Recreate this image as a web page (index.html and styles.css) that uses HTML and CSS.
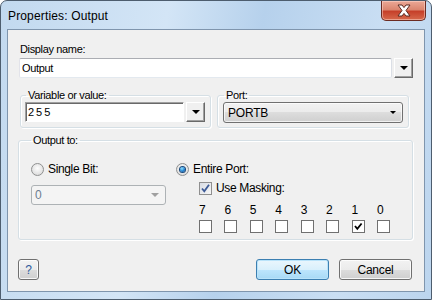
FILE: index.html
```html
<!DOCTYPE html>
<html lang="en">
<head>
    <meta charset="UTF-8">
    <title>Properties: Output</title>
    <link rel="stylesheet" href="styles.css">
</head>
<body>

<div class="window">
    <div class="titlebar">
        <span class="title">Properties: Output</span>
        <button class="close">
            <svg width="18" height="13" viewBox="0 0 18 13">
                <path d="M3 1 L7 1 L9 3.6 L11 1 L15 1 L11 6.5 L15 12 L11 12 L9 9.4 L7 12 L3 12 L7 6.5 Z" fill="#fff" stroke="#5a2a22" stroke-width="1"/>
            </svg>
        </button>
    </div>

    <div class="client">
        <div class="label">Display name:</div>
        <div class="combo-row">
            <input type="text" class="text-input" value="Output">
            <button class="drop-btn"><span class="arrow"></span></button>
        </div>

        <div class="groups">
            <fieldset class="group group-var">
                <legend>Variable or value:</legend>
                <div class="combo-row">
                    <input type="text" class="sunken-input" value="255">
                    <button class="drop-btn small"><span class="arrow"></span></button>
                </div>
            </fieldset>
            <fieldset class="group group-port">
                <legend>Port:</legend>
                <div class="select">
                    <span>PORTB</span>
                    <span class="arrow small-arrow"></span>
                </div>
            </fieldset>
        </div>

        <fieldset class="group group-output">
            <legend>Output to:</legend>
            <div class="output-cols">
                <div class="col-single">
                    <label class="radio-row"><span class="radio"></span>Single Bit:</label>
                    <div class="select disabled">
                        <span>0</span>
                        <span class="arrow small-arrow"></span>
                    </div>
                </div>
                <div class="col-entire">
                    <label class="radio-row"><span class="radio checked"></span>Entire Port:</label>
                    <label class="check-row">
                        <span class="checkbox checked">
                            <svg width="11" height="11" viewBox="0 0 11 11"><path d="M2 5.5 L4.3 8.3 L9 1.8" fill="none" stroke="#3c5a96" stroke-width="1.8"/></svg>
                        </span>Use Masking:
                    </label>
                    <div class="bits" id="bits"></div>
                </div>
            </div>
        </fieldset>

        <div class="footer">
            <button class="btn help">?</button>
            <button class="btn ok">OK</button>
            <button class="btn cancel">Cancel</button>
        </div>
    </div>
</div>

<script>
    let bits = document.getElementById("bits");
    for (let i = 7; i >= 0; i--) {
        let mark = i === 1 ? '<svg width="11" height="11" viewBox="0 0 11 11"><path d="M2 5 L4.3 7.8 L8.6 2.5" fill="none" stroke="#000" stroke-width="1.8"/></svg>' : "";
        bits.innerHTML += `<div class="bit"><span class="bit-num">${i}</span><span class="bit-box">${mark}</span></div>`;
    }
</script>

</body>
</html>
```

FILE: styles.css
```css
body {
    margin: 0;
    font-family: "Liberation Sans", Arial, sans-serif;
    font-size: 11px;
    letter-spacing: -0.35px;
    color: #000;
    background: #fff;
}
.window {
    width: 432px;
    height: 300px;
    box-sizing: border-box;
    border: 1px solid #4d5d6e;
    border-radius: 7px 7px 0 0;
    padding: 0 6px 7px 6px;
    display: flex;
    flex-direction: column;
    background: linear-gradient(100deg, #c2d9ef 0%, #d3e5f6 35%, #b6d1ec 55%, #c9def3 80%, #bcd5ee 100%);
}
.titlebar {
    height: 29px;
    display: flex;
    align-items: flex-start;
}
.title {
    font-size: 12px;
    letter-spacing: 0.15px;
    margin-top: 8px;
    margin-left: 1px;
    color: #000;
}
.close {
    margin-left: auto;
    margin-right: -1px;
    width: 45px;
    height: 20px;
    padding: 0;
    border: 1px solid #6b2b22;
    border-top: none;
    border-radius: 0 0 5px 5px;
    background: linear-gradient(#eba896 0%, #db8670 45%, #c6402a 55%, #d6694c 100%);
    box-shadow: inset 0 0 0 1px rgba(255, 220, 210, 0.5);
    display: flex;
    align-items: center;
    justify-content: center;
}
.client {
    flex: 1;
    background: #f0f0f0;
    border: 1px solid #7f95ad;
    padding: 12px 11px 11px 10px;
    display: flex;
    flex-direction: column;
}
.label {
    line-height: 14px;
    margin-left: 2px;
    margin-bottom: 2px;
}
.combo-row {
    display: flex;
    gap: 2px;
    margin-left: 1px;
}
.text-input {
    width: 375px;
    height: 20px;
    box-sizing: border-box;
    border: 1px solid #abadb3;
    border-left-color: #e2e3ea;
    border-right-color: #dbdfe6;
    border-bottom-color: #e3e9ef;
    border-radius: 2px;
    padding: 0 2px;
    font: 11px "Liberation Sans", Arial, sans-serif;
    letter-spacing: -0.35px;
    background: #fff;
    outline: none;
}
.drop-btn {
    width: 19px;
    height: 20px;
    padding: 0;
    background: #f0f0f0;
    border: 1px solid;
    border-color: #fff #696969 #696969 #fff;
    box-shadow: inset -1px -1px 0 #a0a0a0;
    display: flex;
    align-items: center;
    justify-content: center;
}
.arrow {
    width: 0;
    height: 0;
    border-left: 4px solid transparent;
    border-right: 4px solid transparent;
    border-top: 4px solid #000;
}
.small-arrow {
    border-left-width: 3px;
    border-right-width: 3px;
    border-top-width: 3px;
}
.groups {
    display: flex;
    gap: 6px;
    margin-top: 11px;
    margin-left: 2px;
}
.group {
    margin: 0;
    border: 1px solid #d5dfe5;
    border-radius: 3px;
    box-shadow: inset 1px 1px 0 #fff, 1px 1px 0 #fff;
    padding: 0 5px 4px 4px;
    min-width: 0;
}
.group legend {
    line-height: 13px;
    padding: 0 2px;
    margin-left: 1px;
}
.group-var {
    width: 191px;
    box-sizing: border-box;
}
.group-var .combo-row {
    margin-left: 0;
}
.sunken-input {
    width: 160px;
    height: 20px;
    box-sizing: border-box;
    border: 1px solid;
    border-color: #a0a0a0 #fff #fff #a0a0a0;
    box-shadow: inset 1px 1px 0 #696969;
    padding: 0 2px;
    font: 11px "Liberation Sans", Arial, sans-serif;
    letter-spacing: 2px;
    background: #fff;
    outline: none;
}
.group-port {
    width: 192px;
    box-sizing: border-box;
    padding-left: 5px;
}
.select {
    height: 21px;
    box-sizing: border-box;
    width: 180px;
    border: 1px solid #707070;
    border-radius: 3px;
    background: linear-gradient(#f2f2f2 0%, #ebebeb 50%, #dddddd 50%, #cfcfcf 100%);
    box-shadow: inset 0 0 0 1px rgba(255, 255, 255, 0.7);
    display: flex;
    align-items: center;
    justify-content: space-between;
    padding: 0 6px 0 4px;
    font-size: 12px;
    letter-spacing: -0.2px;
}
.group-output {
    width: 395px;
    box-sizing: border-box;
    margin-top: 6px;
    padding: 0 0 6px 12px;
}
.group-output legend {
    margin-left: 0;
}
.output-cols {
    display: flex;
    margin-top: 15px;
}
.col-single {
    width: 145px;
    display: flex;
    flex-direction: column;
}
.radio-row, .check-row {
    display: flex;
    align-items: center;
    gap: 4px;
    line-height: 14px;
    font-size: 12px;
}
.radio {
    width: 13px;
    height: 13px;
    box-sizing: border-box;
    border-radius: 50%;
    border: 1px solid #8f9090;
    background: radial-gradient(circle at 50% 40%, #fdfdfd 0%, #e4e4e4 60%, #cfcfcf 100%);
    display: flex;
    align-items: center;
    justify-content: center;
}
.radio.checked::after {
    content: "";
    width: 5px;
    height: 5px;
    border-radius: 50%;
    background: radial-gradient(circle at 40% 35%, #8fe3ff 0%, #1f7fd0 55%, #0b3f7a 100%);
    box-shadow: 0 0 0 1px #17477a;
}
.select.disabled {
    width: 135px;
    height: 20px;
    margin-top: 9px;
    border-color: #adb2b5;
    background: #f4f4f4;
    box-shadow: none;
    color: #6d7d90;
    padding: 0 4px 0 3px;
}
.select.disabled .arrow {
    border-top-color: #a0a0a0;
    border-left-width: 4px;
    border-right-width: 4px;
    border-top-width: 4px;
    margin-right: 2px;
}
.check-row {
    margin-left: 23px;
    margin-top: 5px;
}
.checkbox {
    width: 13px;
    height: 13px;
    box-sizing: border-box;
    border: 1px solid #8f8f8f;
    background: linear-gradient(135deg, #d8dce4, #f6f6f6);
    display: flex;
    align-items: center;
    justify-content: center;
}
.bits {
    display: grid;
    grid-template-columns: repeat(8, 25.43px);
    margin-left: 23px;
    margin-top: 9px;
}
.bit {
    display: flex;
    flex-direction: column;
    gap: 3px;
}
.bit-num {
    font-size: 12px;
    line-height: 13px;
}
.bit-box {
    width: 13px;
    height: 13px;
    box-sizing: border-box;
    border: 1px solid #707070;
    background: #fff;
    display: flex;
    align-items: center;
    justify-content: center;
}
.footer {
    display: flex;
    margin-top: 19px;
}
.btn {
    height: 21px;
    width: 73px;
    box-sizing: border-box;
    border: 1px solid #707070;
    border-radius: 3px;
    background: linear-gradient(#f2f2f2 0%, #ebebeb 50%, #dddddd 50%, #cfcfcf 100%);
    box-shadow: inset 0 0 0 1px rgba(255, 255, 255, 0.8);
    font: 12px "Liberation Sans", Arial, sans-serif;
    letter-spacing: -0.2px;
    padding: 0;
}
.help {
    width: 21px;
    color: #2c5a9c;
}
.ok {
    margin-left: auto;
    border-color: #3c7fb1;
    background: linear-gradient(#eaf6fd 0%, #d9f0fc 50%, #bee6fd 50%, #a7d9f5 100%);
    box-shadow: inset 0 0 0 1px #b9e3fa;
}
.cancel {
    margin-left: 10px;
    margin-right: 1px;
}
```
